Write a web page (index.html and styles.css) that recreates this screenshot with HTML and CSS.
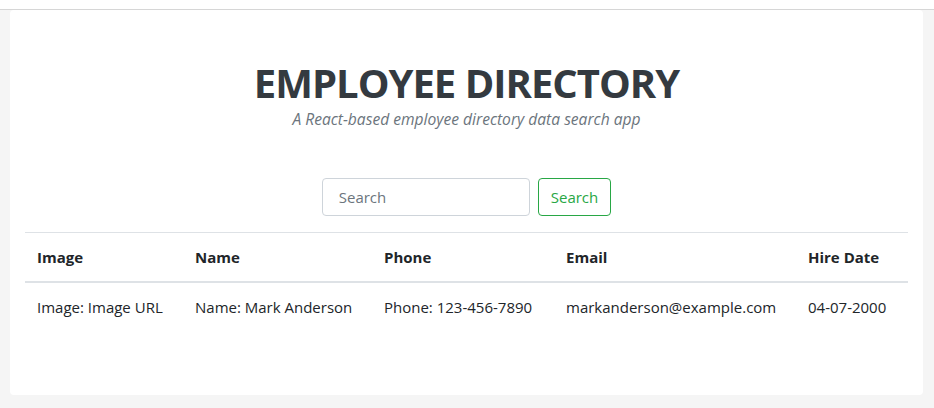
FILE: index.html
```html
<!DOCTYPE html>
<html lang="en">
<head>
<meta charset="utf-8">
<title>Employee Directory</title>
<link rel="stylesheet" href="styles.css">
</head>
<body>
<div class="topbar"></div>
<main class="page">
  <div class="card">
    <header class="hero">
      <h1 class="title">EMPLOYEE DIRECTORY</h1>
      <p class="subtitle">A React-based employee directory data search app</p>
    </header>
    <form class="search">
      <input class="search-input" type="text" placeholder="Search">
      <button class="search-btn" type="button">Search</button>
    </form>
    <table class="table">
      <colgroup>
        <col class="c-image"><col class="c-name"><col class="c-phone"><col class="c-email"><col class="c-date">
      </colgroup>
      <thead>
        <tr><th>Image</th><th>Name</th><th>Phone</th><th>Email</th><th>Hire Date</th></tr>
      </thead>
      <tbody>
        <tr><td>Image: Image URL</td><td>Name: Mark Anderson</td><td>Phone: 123-456-7890</td><td>markanderson@example.com</td><td>04-07-2000</td></tr>
      </tbody>
    </table>
  </div>
</main>
</body>
</html>
```
FILE: styles.css
```css
* { box-sizing: border-box; }
html, body { margin: 0; padding: 0; }
body {
  background: #f5f5f5;
  font-family: "Open Sans", "Noto Sans", sans-serif;
  color: #212529;
  font-size: 16px;
  line-height: 1.5;
}
.topbar {
  height: 10px;
  background: #fff;
  border-bottom: 1px solid #d6d6d6;
}
.page {
  padding: 0 11px 13px 10px;
}
.card {
  background: #fff;
  border-radius: 4px;
  padding: 49px 15px 64px;
}
.hero { text-align: center; }
.title {
  margin: 0;
  font-size: 40px;
  line-height: 48px;
  letter-spacing: -1px;
  font-weight: 700;
  color: #343a40;
}
.subtitle {
  margin: 0;
  font-style: italic;
  color: #6c757d;
  font-size: 15.6px;
  line-height: 24px;
}
.search {
  display: flex;
  justify-content: center;
  gap: 8px;
  margin-top: 47px;
  margin-bottom: 16px;
}
.search-input {
  width: 208px;
  height: 38px;
  padding: 6px 16px;
  border: 1px solid #ced4da;
  border-radius: 4px;
  font: inherit;
  font-size: 15px;
  color: #495057;
}
.search-input::placeholder { color: #6c757d; }
.search-btn {
  height: 38px;
  padding: 6px 12px;
  border: 1px solid #28a745;
  border-radius: 4px;
  background: #fff;
  color: #28a745;
  font: inherit;
  font-size: 15px;
}
.table {
  width: 100%;
  border-collapse: collapse;
  table-layout: fixed;
  font-size: 15px;
}
.c-image { width: 158px; }
.c-name { width: 189px; }
.c-phone { width: 182px; }
.c-email { width: 242px; }
.c-date { width: auto; }
.table th, .table td {
  padding: 12px;
  text-align: left;
  vertical-align: top;
  line-height: 24px;
  border-top: 1px solid #dee2e6;
  white-space: nowrap;
}
.table th { font-weight: 700; }
.table thead th { border-bottom: 2px solid #dee2e6; }
```
